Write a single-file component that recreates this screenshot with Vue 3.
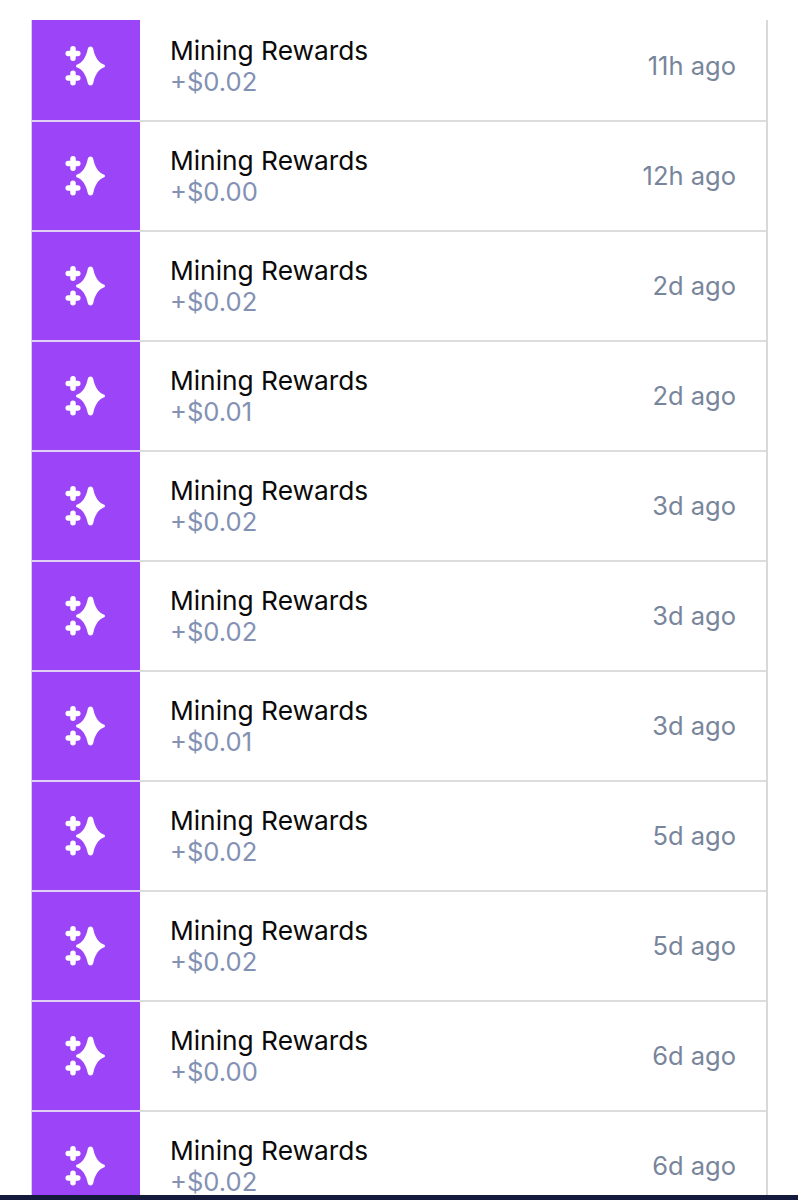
<script setup>
const rows = [
  { amount: "+$0.02", time: "11h ago" },
  { amount: "+$0.00", time: "12h ago" },
  { amount: "+$0.02", time: "2d ago" },
  { amount: "+$0.01", time: "2d ago" },
  { amount: "+$0.02", time: "3d ago" },
  { amount: "+$0.02", time: "3d ago" },
  { amount: "+$0.01", time: "3d ago" },
  { amount: "+$0.02", time: "5d ago" },
  { amount: "+$0.02", time: "5d ago" },
  { amount: "+$0.00", time: "6d ago" },
  { amount: "+$0.02", time: "6d ago" },
];
</script>

<template>
  <div class="page">
    <div class="top-cover"></div>
    <ul class="list">
      <li v-for="(row, i) in rows" :key="i" class="row">
        <div class="row__icon">
          <svg width="44" height="44" viewBox="0 0 44 44" fill="#fff" stroke="none">
            <path d="M26.5 2.5c1.6 0 2.5 1.2 2.900 3 1.200 6 4.100 12 9.200 14.500 1.600.5 2.400 1.100 2.400 2s-.8 1.500-2.400 2c-5.100 2.500-8 8.500-9.200 14.500-.4 1.800-1.300 3-2.900 3s-2.500-1.200-2.900-3c-1.200-6-4.100-12-9.200-14.500-1.600-.5-2.400-1.100-2.400-2s.8-1.500 2.400-2c5.100-2.500 8-8.500 9.200-14.500.4-1.800 1.300-3 2.900-3z" />
            <path d="M9 4.700v9.600M4.200 9.500h9.600M9 29.200v9.600M4.200 34h9.600" fill="none" stroke="#fff" stroke-width="5.500" stroke-linecap="round" />
          </svg>
        </div>
        <div class="row__body">
          <div class="row__title">Mining Rewards</div>
          <div class="row__amount">{{ row.amount }}</div>
        </div>
        <div class="row__time">{{ row.time }}</div>
      </li>
    </ul>
    <div class="bottom-bar"></div>
  </div>
</template>

<style>
html,
body {
  margin: 0;
  background: #fff;
}
</style>

<style scoped>
.page {
  position: relative;
  width: 798px;
  height: 1200px;
  overflow: hidden;
  box-sizing: border-box;
  padding: 12px 31px 0;
  font-family: Inter, "Liberation Sans", sans-serif;
}

.top-cover {
  position: absolute;
  top: 0;
  left: 0;
  right: 0;
  height: 20px;
  background: #fff;
}

.list {
  margin: 0;
  padding: 0;
  list-style: none;
  width: 737px;
  box-sizing: border-box;
  border-left: 1px solid #d6d3de;
  border-right: 2px solid #d9d9dc;
}

.row {
  display: flex;
  align-items: stretch;
  height: 110px;
  box-sizing: border-box;
  border-bottom: 2px solid #dcdcdf;
}

.row__icon {
  width: 108px;
  margin-bottom: -2px;
  flex: none;
  display: flex;
  align-items: center;
  justify-content: center;
  background: #9c44f8;
  border-bottom: 2px solid #e0d0f5;
  box-sizing: border-box;
}

.row__body {
  flex: 1;
  padding: 23px 0 0 30px;
}

.row__title {
  font-size: 26.3px;
  line-height: 32px;
  color: #0a0a0a;
}

.row__amount {
  font-size: 25.6px;
  line-height: 30px;
  color: #8391b3;
}

.row__time {
  padding: 38px 30px 0 0;
  font-size: 25.5px;
  line-height: 32px;
  color: #78859b;
}

.bottom-bar {
  position: absolute;
  left: 0;
  right: 0;
  bottom: 0;
  height: 5px;
  background: #141a3c;
}
</style>
